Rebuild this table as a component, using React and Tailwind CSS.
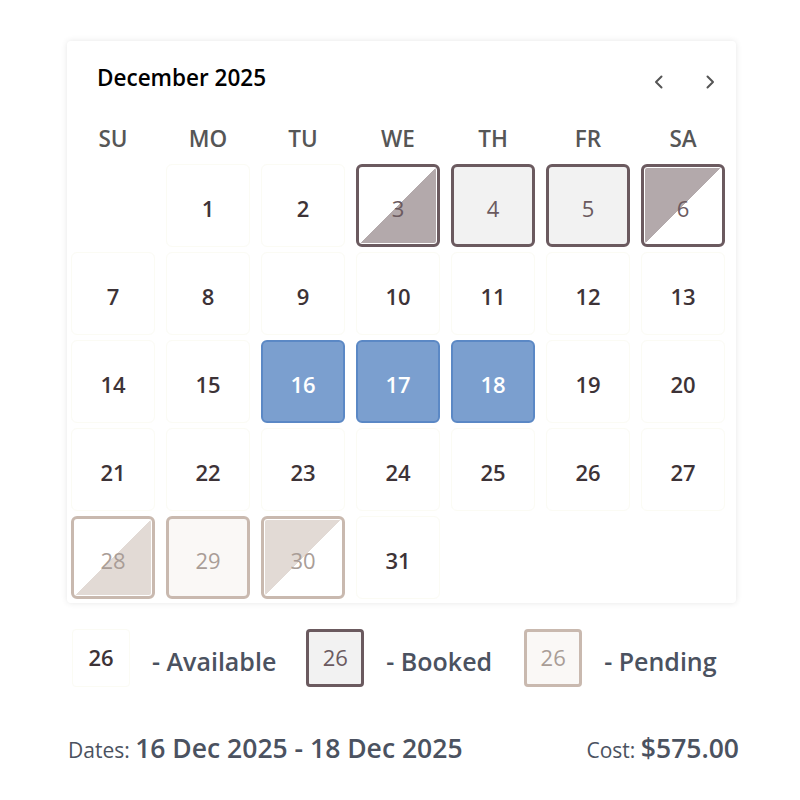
import React from "react";

const F = { fontFamily: '"Open Sans", "Noto Sans", sans-serif' };

const days = [
  null,
  { d: 1 }, { d: 2 }, { d: 3, t: "bookHalfA" }, { d: 4, t: "book" }, { d: 5, t: "book" }, { d: 6, t: "bookHalfB" },
  { d: 7 }, { d: 8 }, { d: 9 }, { d: 10 }, { d: 11 }, { d: 12 }, { d: 13 },
  { d: 14 }, { d: 15 }, { d: 16, t: "sel" }, { d: 17, t: "sel" }, { d: 18, t: "sel" }, { d: 19 }, { d: 20 },
  { d: 21 }, { d: 22 }, { d: 23 }, { d: 24 }, { d: 25 }, { d: 26 }, { d: 27 },
  { d: 28, t: "pendHalfA" }, { d: 29, t: "pend" }, { d: 30, t: "pendHalfB" }, { d: 31 },
];

const styles = {
  avail: "border border-[#fbfbf4] bg-white text-[#3d3337] font-semibold",
  book: "border-[3px] border-[#6b5a5f] bg-[#f2f2f2] text-[#6b5a5f] font-medium",
  bookHalfA:
    "border-[3px] border-[#6b5a5f] text-[#6b5a5f] font-medium shadow-[inset_0_0_0_1px_white] bg-[linear-gradient(to_bottom_right,#ffffff_50%,#b3a9ab_50%)]",
  bookHalfB:
    "border-[3px] border-[#6b5a5f] text-[#6b5a5f] font-medium shadow-[inset_0_0_0_1px_white] bg-[linear-gradient(to_bottom_right,#b3a9ab_50%,#ffffff_50%)]",
  sel: "border-2 border-[#5b88c5] bg-[#7b9fcf] text-white font-semibold",
  pend: "border-[3px] border-[#c9b9af] bg-[#faf8f6] text-[#a99d97] font-medium",
  pendHalfA:
    "border-[3px] border-[#c9b9af] text-[#a99d97] font-medium shadow-[inset_0_0_0_1px_white] bg-[linear-gradient(to_bottom_right,#ffffff_50%,#e2dad5_50%)]",
  pendHalfB:
    "border-[3px] border-[#c9b9af] text-[#a99d97] font-medium shadow-[inset_0_0_0_1px_white] bg-[linear-gradient(to_bottom_right,#e2dad5_50%,#ffffff_50%)]",
};

function Chevron({ dir }) {
  return (
    <svg width="14" height="18" viewBox="0 0 14 18" fill="none">
      <polyline
        points={dir === "left" ? "9.5,3.5 4,9 9.5,14.5" : "4.5,3.5 10,9 4.5,14.5"}
        stroke="#555555"
        strokeWidth="2"
        strokeLinecap="round"
        strokeLinejoin="round"
      />
    </svg>
  );
}

export default function App() {
  return (
    <div className="w-[800px] h-[800px] bg-white" style={F}>
      <div className="pt-[41px] pl-[67px]">
        <div className="w-[669px] bg-white rounded-[4px] shadow-[0_0_6px_rgba(0,0,0,0.10)] pl-[4px] pb-[4px]">
          <div className="flex items-center h-[78px] pl-[26px] pr-[19px] pt-[4px]">
            <div className="text-[22.5px] font-semibold text-black flex-1 -mt-[8px]">December 2025</div>
            <div className="flex items-center gap-[37px]">
              <Chevron dir="left" />
              <Chevron dir="right" />
            </div>
          </div>
          <div className="grid grid-cols-[repeat(7,84px)] gap-x-[11px]">
            {["SU", "MO", "TU", "WE", "TH", "FR", "SA"].map((w) => (
              <div key={w} className="h-[45px] flex items-center justify-center text-[22.5px] font-semibold text-[#565656] -mt-[3px] mb-[3px]">
                {w}
              </div>
            ))}
          </div>
          <div className="grid grid-cols-[repeat(7,84px)] auto-rows-[83px] gap-x-[11px] gap-y-[5px]">
            {days.map((c, i) =>
              c ? (
                <div
                  key={i}
                  className={
                    "rounded-[6px] flex items-center justify-center text-[22px] pt-[6px] " +
                    styles[c.t || "avail"]
                  }
                >
                  {c.d}
                </div>
              ) : (
                <div key={i} />
              )
            )}
          </div>
        </div>
      </div>

      <div className="flex items-center h-[58px] mt-[26px] pl-[72px]">
        <div className="w-[58px] h-[58px] rounded-[4px] border border-[#fbfbf4] flex items-center justify-center text-[22px] font-semibold text-[#3d3337] pb-[2px]">
          26
        </div>
        <div className="ml-[22px] text-[25px] font-semibold text-[#4b5260] mt-[7px]">- Available</div>
        <div className="ml-[30px] w-[58px] h-[58px] rounded-[4px] border-[3px] border-[#6b5a5f] bg-[#f2f2f2] flex items-center justify-center text-[22px] text-[#6b5a5f] pb-[2px]">
          26
        </div>
        <div className="ml-[22px] text-[25px] font-semibold text-[#4b5260] mt-[7px]">- Booked</div>
        <div className="ml-[32px] w-[58px] h-[58px] rounded-[4px] border-[3px] border-[#c9b9af] bg-[#faf8f6] flex items-center justify-center text-[22px] text-[#a99d97] pb-[2px]">
          26
        </div>
        <div className="ml-[22px] text-[25px] font-semibold text-[#4b5260] mt-[7px]">- Pending</div>
      </div>

      <div className="flex items-baseline justify-between mt-[42px] pl-[68px] w-[739px] text-[#4b5260]">
        <div>
          <span className="text-[21px]">Dates: </span>
          <span className="text-[26.5px] font-semibold">16 Dec 2025 - 18 Dec 2025</span>
        </div>
        <div>
          <span className="text-[21px]">Cost: </span>
          <span className="text-[26.5px] font-semibold">$575.00</span>
        </div>
      </div>
    </div>
  );
}
